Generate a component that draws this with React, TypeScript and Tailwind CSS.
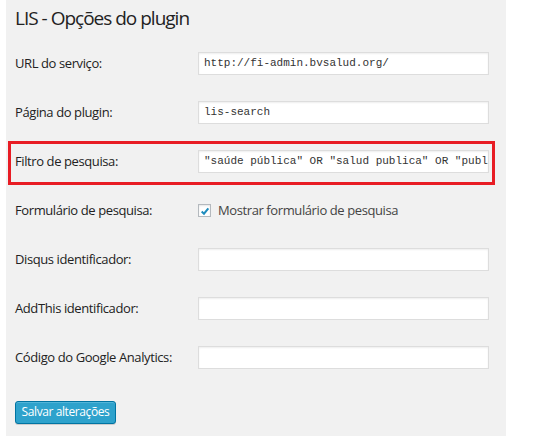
export default function App() {
    const rows = [
        { label: 'URL do serviço:', value: 'http://fi-admin.bvsalud.org/' },
        { label: 'Página do plugin:', value: 'lis-search' },
        { label: 'Filtro de pesquisa:', value: '"saúde pública" OR "salud publica" OR "public health"', marked: true },
    ];
    const empties = ['Disqus identificador:', 'AddThis identificador:', 'Código do Google Analytics:'];

    return (
        <div className="w-[533px] h-[436px] bg-white overflow-hidden font-['Open_Sans',sans-serif]">
            <div className="ml-[6px] w-[500px] h-full bg-[#f1f1f1] pl-[9px]">
                {/* Title */}
                <h2 className="h-[39px] pt-[5px] text-[19px] leading-[27px] tracking-[-1px] text-[#222]">LIS - Opções do plugin</h2>

                {rows.map((r) => (
                    <div key={r.label} className="relative h-[49px] flex items-center">
                        {r.marked && (
                            <div className="absolute left-[-7px] top-[4px] w-[487px] h-[44px] border-[3px] border-[#e81c24]" />
                        )}
                        <label className="w-[183px] text-[13px] tracking-[-0.4px] text-[#222]">{r.label}</label>
                        <div className="w-[291px] h-[23px] bg-white border border-[#ddd] shadow-[inset_0_1px_2px_rgba(0,0,0,0.07)] px-[5px] flex items-center overflow-hidden">
                            <span className="whitespace-nowrap font-['Liberation_Mono',monospace] text-[11px] text-[#333]">{r.value}</span>
                        </div>
                    </div>
                ))}

                {/* Checkbox row */}
                <div className="h-[49px] flex items-center">
                    <label className="w-[183px] text-[13px] tracking-[-0.4px] text-[#222]">Formulário de pesquisa:</label>
                    <div className="flex items-center gap-[7px]">
                        <span className="w-[13px] h-[13px] bg-white border border-[#b4b9be] shadow-[inset_0_1px_2px_rgba(0,0,0,0.1)] flex items-center justify-center">
                            <svg width="10" height="10" viewBox="0 0 12 12">
                                <path d="M2 6.5 L4.8 9.2 L10 2.8" fill="none" stroke="#1e8cbe" strokeWidth="2.4" />
                            </svg>
                        </span>
                        <span className="text-[13px] tracking-[-0.4px] text-[#444]">Mostrar formulário de pesquisa</span>
                    </div>
                </div>

                {empties.map((l) => (
                    <div key={l} className="h-[49px] flex items-center">
                        <label className="w-[183px] text-[13px] tracking-[-0.4px] text-[#222]">{l}</label>
                        <div className="w-[291px] h-[23px] bg-white border border-[#ddd] shadow-[inset_0_1px_2px_rgba(0,0,0,0.07)]" />
                    </div>
                ))}

                {/* Save */}
                <div className="pt-[16px]">
                    <button className="w-[101px] h-[23px] rounded-[3px] bg-[#2ea2cc] border border-[#0074a2] shadow-[inset_0_1px_0_rgba(120,200,230,0.5),0_1px_0_rgba(0,0,0,0.15)] text-white text-[12px] tracking-[-0.4px] leading-none">
                        Salvar alterações
                    </button>
                </div>
            </div>
        </div>
    );
}
